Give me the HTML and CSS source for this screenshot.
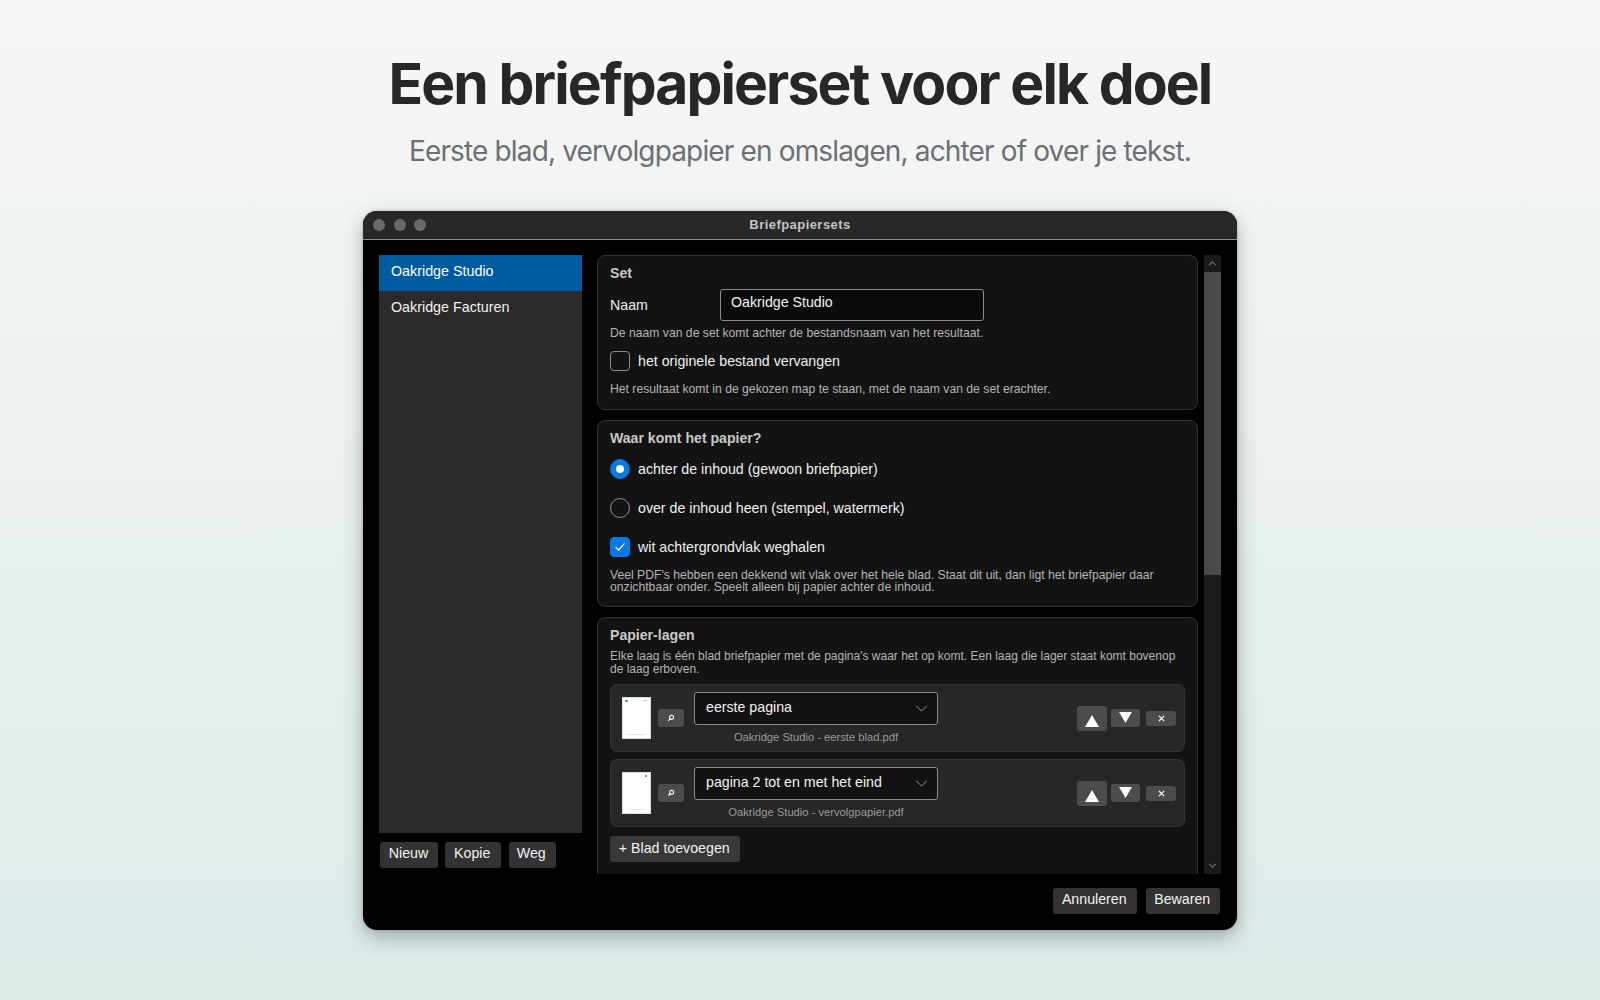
FILE: index.html
```html
<!DOCTYPE html>
<html lang="nl">
<head>
<meta charset="utf-8">
<title>Briefpapiersets</title>
<link rel="stylesheet" href="styles.css">
</head>
<body>
<header class="hero">
  <h1 class="hero-title">Een briefpapierset voor elk doel</h1>
  <p class="hero-sub">Eerste blad, vervolgpapier en omslagen, achter of over je tekst.</p>
</header>
<main class="window">
  <div class="titlebar">
    <div class="lights"><i class="light"></i><i class="light"></i><i class="light"></i></div>
    <div class="title">Briefpapiersets</div>
  </div>
  <div class="body">
    <aside class="side">
      <ul class="list">
        <li class="list-item selected">Oakridge Studio</li>
        <li class="list-item">Oakridge Facturen</li>
      </ul>
      <div class="side-buttons">
        <button class="btn btn-nieuw">Nieuw</button>
        <button class="btn btn-kopie">Kopie</button>
        <button class="btn btn-weg">Weg</button>
      </div>
    </aside>
    <div class="scroller">
      <section class="panel panel-set">
        <h2 class="panel-title">Set</h2>
        <div class="name-row">
          <label class="name-label">Naam</label>
          <div class="input">Oakridge Studio</div>
        </div>
        <p class="hint hint-name">De naam van de set komt achter de bestandsnaam van het resultaat.</p>
        <div class="option option-replace">
          <span class="check"></span>
          <span>het originele bestand vervangen</span>
        </div>
        <p class="hint hint-result">Het resultaat komt in de gekozen map te staan, met de naam van de set erachter.</p>
      </section>
      <section class="panel panel-where">
        <h2 class="panel-title">Waar komt het papier?</h2>
        <div class="option option-first">
          <span class="radio on"></span>
          <span>achter de inhoud (gewoon briefpapier)</span>
        </div>
        <div class="option option-next">
          <span class="radio"></span>
          <span>over de inhoud heen (stempel, watermerk)</span>
        </div>
        <div class="option option-next">
          <span class="check on"><svg viewBox="0 0 20 20" class="tick"><path d="M5.5 10.5l3 3 6-7" fill="none" stroke="#fff" stroke-width="1.4" stroke-linecap="round" stroke-linejoin="round"/></svg></span>
          <span>wit achtergrondvlak weghalen</span>
        </div>
        <p class="hint hint-long">Veel PDF's hebben een dekkend wit vlak over het hele blad. Staat dit uit, dan ligt het briefpapier daar onzichtbaar onder. Speelt alleen bij papier achter de inhoud.</p>
      </section>
      <section class="panel panel-layers">
        <h2 class="panel-title">Papier-lagen</h2>
        <p class="hint hint-layers">Elke laag is één blad briefpapier met de pagina's waar het op komt. Een laag die lager staat komt bovenop de laag erboven.</p>
        <div class="layer">
          <div class="thumb"><i class="thumb-mark"></i><i class="thumb-corner"></i></div>
          <button class="mini mag"><svg viewBox="0 0 10 10" class="mag-icon"><circle cx="5.8" cy="4.2" r="2.5" fill="none" stroke="#fff" stroke-width="1.3"/><path d="M4 6L2 8" stroke="#fff" stroke-width="1.5" stroke-linecap="round"/></svg></button>
          <div class="layer-mid">
            <div class="select"><span>eerste pagina</span><svg viewBox="0 0 14 8" class="chev"><path d="M1 1l6 6 6-6" fill="none" stroke="#a8a8a8" stroke-width="1"/></svg></div>
            <div class="file">Oakridge Studio - eerste blad.pdf</div>
          </div>
          <div class="layer-actions">
            <button class="mini up"><svg viewBox="0 0 14 12" class="tri-up"><path d="M7 0l7 12H0z" fill="#fff"/></svg></button>
            <button class="mini down"><svg viewBox="0 0 14 12" class="tri-down"><path d="M0 0h14L7 12z" fill="#fff"/></svg></button>
            <button class="mini del"><svg viewBox="0 0 8 8" class="x"><path d="M1 1l6 6M7 1L1 7" stroke="#fff" stroke-width="1.4"/></svg></button>
          </div>
        </div>
        <div class="layer">
          <div class="thumb"><i class="thumb-corner right"></i></div>
          <button class="mini mag"><svg viewBox="0 0 10 10" class="mag-icon"><circle cx="5.8" cy="4.2" r="2.5" fill="none" stroke="#fff" stroke-width="1.3"/><path d="M4 6L2 8" stroke="#fff" stroke-width="1.5" stroke-linecap="round"/></svg></button>
          <div class="layer-mid">
            <div class="select"><span>pagina 2 tot en met het eind</span><svg viewBox="0 0 14 8" class="chev"><path d="M1 1l6 6 6-6" fill="none" stroke="#a8a8a8" stroke-width="1"/></svg></div>
            <div class="file">Oakridge Studio - vervolgpapier.pdf</div>
          </div>
          <div class="layer-actions">
            <button class="mini up"><svg viewBox="0 0 14 12" class="tri-up"><path d="M7 0l7 12H0z" fill="#fff"/></svg></button>
            <button class="mini down"><svg viewBox="0 0 14 12" class="tri-down"><path d="M0 0h14L7 12z" fill="#fff"/></svg></button>
            <button class="mini del"><svg viewBox="0 0 8 8" class="x"><path d="M1 1l6 6M7 1L1 7" stroke="#fff" stroke-width="1.4"/></svg></button>
          </div>
        </div>
        <button class="btn btn-add">+ Blad toevoegen</button>
      </section>
    </div>
    <div class="scrollbar">
      <svg viewBox="0 0 10 6" class="sb-arrow"><path d="M1 5l4-4 4 4" fill="none" stroke="#bbb" stroke-width="1"/></svg>
      <div class="sb-track"><div class="sb-thumb"></div></div>
      <svg viewBox="0 0 10 6" class="sb-arrow"><path d="M1 1l4 4 4-4" fill="none" stroke="#bbb" stroke-width="1"/></svg>
    </div>
  </div>
  <footer class="foot">
    <button class="btn btn-cancel">Annuleren</button>
    <button class="btn btn-save">Bewaren</button>
  </footer>
</main>
</body>
</html>
```
FILE: styles.css
```css
* { box-sizing: border-box; }
html, body { height: 100%; }
body {
  margin: 0;
  height: 1000px;
  overflow: hidden;
  background: linear-gradient(180deg, #f6f7f6 0%, #eef3f2 35%, #e4eeed 70%, #deebe9 100%);
  font-family: "Liberation Sans", Arial, sans-serif;
  display: flex;
  flex-direction: column;
  align-items: center;
}
.hero { text-align: center; padding-top: 48px; height: 211px; }
.hero-title {
  margin: 0;
  font: 700 57px/72px Inter, sans-serif;
  letter-spacing: -1.9px;
  color: #262828;
}
.hero-sub {
  margin: 12.5px 0 0;
  font: 400 28px/36px Inter, sans-serif;
  letter-spacing: -0.85px;
  color: #6d7072;
}
.window {
  width: 874px;
  height: 719px;
  background: #000;
  border-radius: 14px;
  overflow: hidden;
  display: flex;
  flex-direction: column;
  box-shadow: 0 8px 20px rgba(40, 60, 60, .35), 0 0 3px rgba(40, 60, 60, .3);
}
.titlebar {
  height: 29px;
  flex: none;
  display: grid;
  grid-template-columns: 1fr auto 1fr;
  align-items: center;
  background: #282828;
  border-bottom: 1px solid #8a8a8a;
}
.lights { display: flex; gap: 8.5px; padding-left: 10px; }
.light { width: 12px; height: 12px; border-radius: 50%; background: #6a6a6a; }
.title { font-size: 13px; font-weight: 700; color: #c4c4c4; letter-spacing: .45px; padding-bottom: 1px; }
.body { display: flex; padding: 15px 16px 0; height: 635px; flex: none; }
.side { width: 203px; margin-right: 15px; flex: none; display: flex; flex-direction: column; }
.list { margin: 0; padding: 0; list-style: none; background: #2a2a2a; height: 578px; }
.list-item { height: 36px; line-height: 32px; padding-left: 12px; font-size: 14.3px; color: #f2f2f2; }
.selected { background: #005a9e; color: #fff; }
.side-buttons { display: flex; gap: 7.5px; margin-top: 9px; padding-left: .5px; }
.btn {
  height: 26px;
  padding: 0 1.5px 3px 0;
  border: 0;
  border-radius: 3px;
  background: #333;
  color: #f2f2f2;
  font: 14.2px/23px "Liberation Sans", Arial, sans-serif;
}
.btn-nieuw { width: 58px; padding-right: 0; }
.btn-kopie { width: 56px; }
.btn-weg { width: 47px; }
.scroller { width: 601px; flex: none; height: 619px; overflow: hidden; display: flex; flex-direction: column; gap: 10px; }
.panel {
  flex: none;
  background: #131313;
  border: 1px solid #333;
  border-radius: 8px;
  padding: 9px 12px 0;
}
.panel-title { margin: 0; font-size: 14.1px; line-height: 16px; font-weight: 700; color: #c9c9c5; }
.panel-set { height: 155px; }
.panel-where { height: 187px; }
.panel-layers { height: 266px; }
.name-row { display: flex; align-items: center; margin-top: 8px; }
.name-label { width: 110px; font-size: 14.2px; color: #eee; }
.input {
  width: 264px;
  height: 32px;
  padding-left: 10px;
  background: #0a0a0a;
  border: 1px solid #8c8c8c;
  border-radius: 3px;
  font-size: 14.2px;
  line-height: 25px;
  color: #f2f2f2;
}
.hint { margin: 0; font-size: 12.2px; line-height: 12px; color: #b4b4b4; }
.hint-name { margin-top: 6px; }
.hint-result { margin-top: 12px; }
.hint-long { margin-top: 12px; }
.hint-layers { margin-top: 7px; margin-bottom: 8.5px; font-size: 12px; line-height: 12.5px; }
.option { display: flex; align-items: center; gap: 8px; font-size: 14.2px; color: #f0f0f0; margin-top: 9px; }
.option-replace { margin-top: 12px; }
.option-first { margin-top: 13px; }
.option-next { margin-top: 19px; }
.check, .radio { width: 20px; height: 20px; flex: none; display: block; border: 1px solid #8c8c8c; }
.check { border-radius: 4px; }
.radio { border-radius: 50%; }
.check.on, .radio.on { background: #0a78e6; border-color: #0a78e6; }
.radio.on { position: relative; }
.radio.on::after {
  content: "";
  position: absolute;
  left: 5px; top: 5px;
  width: 8px; height: 8px;
  border-radius: 50%;
  background: #fff;
}
.tick { display: block; width: 18px; height: 18px; }
.layer {
  height: 68px;
  margin-bottom: 7px;
  display: flex;
  align-items: flex-start;
  background: #272727;
  border: 1px solid #333;
  border-radius: 7px;
}
.thumb {
  width: 29.5px;
  height: 42px;
  margin: 12px 7px 0 10.5px;
  background: #fff;
  border: 1px solid #ddd;
  flex: none;
  position: relative;
}
.thumb::after {
  content: "";
  position: absolute;
  left: 5px; right: 5px; bottom: 3px;
  height: 1px;
  background: #e6e6e6;
}
.thumb-mark { position: absolute; left: 2px; top: 2px; width: 3px; height: 2px; background: #5fa080; }
.thumb-corner { position: absolute; right: 3px; top: 2px; width: 4px; height: 1px; background: #ccc; }
.thumb-corner.right { background: #7a9a90; width: 2px; height: 2px; }
.mini {
  padding: 0;
  border: 0;
  border-radius: 3px;
  background: #4c4c4c;
  display: flex;
  align-items: center;
  justify-content: center;
  flex: none;
}
.mag { width: 26px; height: 18px; margin-top: 24px; }
.mag-icon { width: 8px; height: 8px; }
.layer-mid { width: 244px; margin-left: 10px; flex: none; padding-top: 7px; }
.select {
  height: 33px;
  display: flex;
  align-items: center;
  justify-content: space-between;
  padding: 0 9px 3px 11px;
  background: #121212;
  border: 1px solid #8c8c8c;
  border-radius: 3px;
  font-size: 14.2px;
  color: #f2f2f2;
}
.chev { width: 13px; height: 7px; margin-top: 3px; }
.file { text-align: center; margin-top: 5px; font-size: 11.2px; line-height: 14px; color: #9a9a9a; }
.layer-actions { margin-left: auto; padding-right: 8px; display: flex; align-items: flex-start; gap: 5px; }
.up { width: 30px; height: 25px; margin-top: 21px; margin-right: -.5px; align-items: flex-end; padding-bottom: 4px; }
.down { width: 29px; height: 18px; margin-top: 24px; align-items: flex-start; padding-top: 3px; }
.del { width: 30px; height: 15px; margin-top: 26px; margin-left: 1px; }
.tri-up { width: 14px; height: 12px; display: block; }
.tri-down { width: 13px; height: 11px; display: block; }
.x { width: 7px; height: 7px; }
.btn-add { width: 130px; background: #383838; margin-top: 2px; padding-bottom: 1px; }
.scrollbar { width: 17px; margin-left: 6px; height: 619px; flex: none; display: flex; flex-direction: column; align-items: center; background: #1a1a1a; }
.sb-arrow { width: 9px; height: 5px; margin: 6px 0; flex: none; }
.sb-track { flex: 1; width: 100%; }
.sb-thumb { width: 100%; height: 303px; background: #4a4a4a; }
.foot { display: flex; justify-content: flex-end; gap: 9px; padding: 13px 17px 0 0; }
.btn-cancel { width: 84px; }
.btn-save { width: 74px; }
```
